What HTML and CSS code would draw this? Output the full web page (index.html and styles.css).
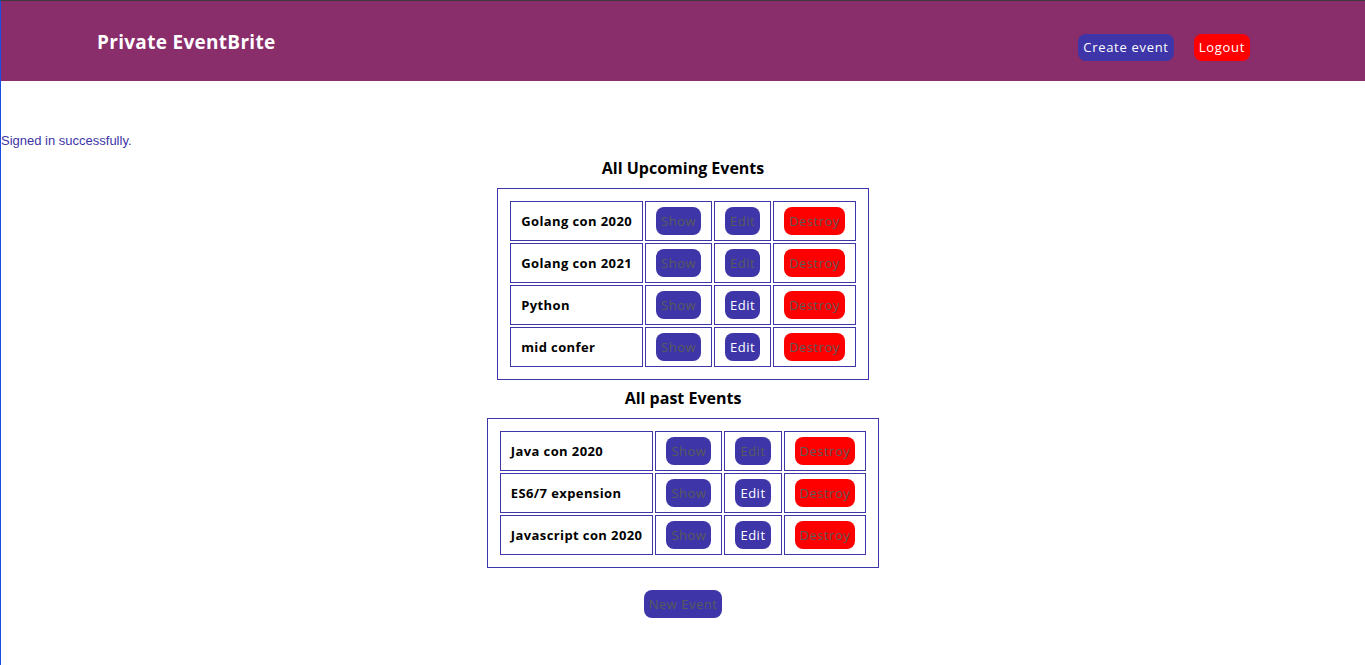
FILE: index.html
```html
<!DOCTYPE html>
<html lang="en">
<head>
<meta charset="utf-8">
<title>Private EventBrite</title>
<link rel="stylesheet" href="styles.css">
</head>
<body>
<header class="topbar">
  <a class="brand" href="#">Private EventBrite</a>
  <nav class="nav">
    <a class="btn btn-blue nav-btn" href="#">Create event</a>
    <a class="btn btn-red nav-btn" href="#">Logout</a>
  </nav>
</header>
<p class="notice">Signed in successfully.</p>
<main class="content">
  <h3 class="section-title">All Upcoming Events</h3>
  <table class="events">
    <tbody>
      <tr>
        <td class="name">Golang con 2020</td>
        <td class="act"><a class="btn btn-blue dim" href="#">Show</a></td>
        <td class="act"><a class="btn btn-blue dim" href="#">Edit</a></td>
        <td class="act"><a class="btn btn-red dim" href="#">Destroy</a></td>
      </tr>
      <tr>
        <td class="name">Golang con 2021</td>
        <td class="act"><a class="btn btn-blue dim" href="#">Show</a></td>
        <td class="act"><a class="btn btn-blue dim" href="#">Edit</a></td>
        <td class="act"><a class="btn btn-red dim" href="#">Destroy</a></td>
      </tr>
      <tr>
        <td class="name">Python</td>
        <td class="act"><a class="btn btn-blue dim" href="#">Show</a></td>
        <td class="act"><a class="btn btn-blue" href="#">Edit</a></td>
        <td class="act"><a class="btn btn-red dim" href="#">Destroy</a></td>
      </tr>
      <tr>
        <td class="name">mid confer</td>
        <td class="act"><a class="btn btn-blue dim" href="#">Show</a></td>
        <td class="act"><a class="btn btn-blue" href="#">Edit</a></td>
        <td class="act"><a class="btn btn-red dim" href="#">Destroy</a></td>
      </tr>
    </tbody>
  </table>
  <h3 class="section-title second">All past Events</h3>
  <table class="events">
    <tbody>
      <tr>
        <td class="name">Java con 2020</td>
        <td class="act"><a class="btn btn-blue dim" href="#">Show</a></td>
        <td class="act"><a class="btn btn-blue dim" href="#">Edit</a></td>
        <td class="act"><a class="btn btn-red dim" href="#">Destroy</a></td>
      </tr>
      <tr>
        <td class="name">ES6/7 expension</td>
        <td class="act"><a class="btn btn-blue dim" href="#">Show</a></td>
        <td class="act"><a class="btn btn-blue" href="#">Edit</a></td>
        <td class="act"><a class="btn btn-red dim" href="#">Destroy</a></td>
      </tr>
      <tr>
        <td class="name">Javascript con 2020</td>
        <td class="act"><a class="btn btn-blue dim" href="#">Show</a></td>
        <td class="act"><a class="btn btn-blue" href="#">Edit</a></td>
        <td class="act"><a class="btn btn-red dim" href="#">Destroy</a></td>
      </tr>
    </tbody>
  </table>
  <a class="btn btn-blue dim new-btn" href="#">New Event</a>
</main>
</body>
</html>
```
FILE: styles.css
```css
html, body {
  margin: 0;
  padding: 0;
}
body {
  min-height: 664px;
  border-top: 1px solid #3a3a3a;
  border-left: 1px solid #1a4fe6;
  font-family: "Open Sans", "Noto Sans", sans-serif;
  background: #fff;
  color: #000;
}
.topbar {
  height: 80px;
  background: #892d6b;
  display: flex;
  align-items: flex-start;
  justify-content: space-between;
  padding: 0 115px 0 96px;
  box-sizing: border-box;
}
.brand {
  margin-top: 28px;
  color: #fff;
  font-weight: 700;
  font-size: 19px;
  letter-spacing: 0.3px;
  text-decoration: none;
  line-height: 26px;
}
.nav {
  display: flex;
  gap: 20px;
  margin-top: 33px;
}
.btn {
  display: inline-block;
  height: 28px;
  line-height: 28px;
  padding: 0 5px;
  border-radius: 8px;
  font-size: 13px;
  letter-spacing: 0.5px;
  text-decoration: none;
  color: #fff;
  white-space: nowrap;
}
.nav-btn {
  height: 27px;
  line-height: 27px;
  letter-spacing: 0.7px;
}
.btn-blue { background: #3d35a8; }
.btn-red { background: #ff0000; }
.dim { color: #5a5a5a; }
.notice {
  margin: 0;
  padding-top: 52px;
  font-family: "Liberation Sans", Arial, sans-serif;
  font-size: 13px;
  line-height: 16px;
  color: #3d35a8;
}
.content {
  display: flex;
  flex-direction: column;
  align-items: center;
}
.section-title {
  margin: 7px 0 8px;
  font-size: 16px;
  line-height: 24px;
  font-weight: 700;
}
.section-title.second {
  margin-top: 6px;
}
.events {
  border: 1px solid #3d35a8;
  padding: 10px;
  border-spacing: 2px;
}
.events td {
  border: 1px solid #3d35a8;
  padding: 5px 10px;
  height: 28px;
}
.events td.name {
  font-weight: 700;
  font-size: 13px;
  letter-spacing: 0.4px;
  white-space: nowrap;
}
.new-btn {
  margin-top: 22px;
}
```
